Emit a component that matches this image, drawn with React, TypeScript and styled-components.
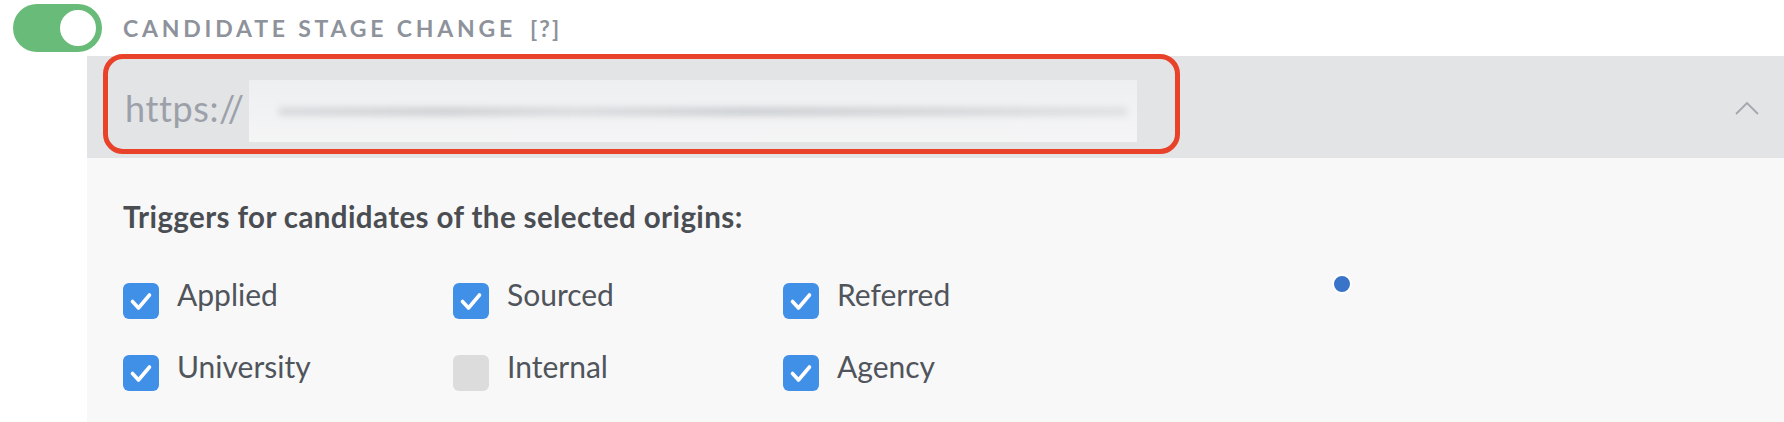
import React, { useState } from "react";
import styled, { createGlobalStyle } from "styled-components";

const GlobalStyle = createGlobalStyle`
  html, body {
    margin: 0;
    padding: 0;
    background: #ffffff;
  }
  body {
    font-family: "Lato", "Open Sans", sans-serif;
  }
`;

type Origin = { label: string; checked: boolean };

const ORIGINS: Origin[] = [
  { label: "Applied", checked: true },
  { label: "Sourced", checked: true },
  { label: "Referred", checked: true },
  { label: "University", checked: true },
  { label: "Internal", checked: false },
  { label: "Agency", checked: true },
];

const App = () => {
  const [enabled, setEnabled] = useState<boolean>(true);
  const [origins, setOrigins] = useState<Origin[]>(ORIGINS);

  const toggleOrigin = (index: number) => {
    setOrigins(prev =>
      prev.map((o, i) => (i === index ? { ...o, checked: !o.checked } : o))
    );
  };

  return (
    <Page>
      <GlobalStyle />
      <Header>
        <Toggle type="button" on={enabled} onClick={() => setEnabled(!enabled)}>
          <Knob on={enabled} />
        </Toggle>
        <Title>Candidate stage change</Title>
        <Help>[?]</Help>
      </Header>
      <Panel>
        <UrlBar>
          <Highlight>
            <Scheme>https://</Scheme>
            <UrlField>
              <BlurredText />
            </UrlField>
          </Highlight>
          <Chevron width="26" height="16" viewBox="0 0 26 16">
            <polyline
              points="2,14 13,3 24,14"
              fill="none"
              stroke="#a4a7ad"
              strokeWidth="1.8"
            />
          </Chevron>
        </UrlBar>
        <Body>
          <Heading>Triggers for candidates of the selected origins:</Heading>
          <OriginGrid>
            {origins.map((o, i) => (
              <OriginItem key={o.label} onClick={() => toggleOrigin(i)}>
                <Box checked={o.checked}>
                  {o.checked && (
                    <svg width="36" height="36" viewBox="0 0 36 36">
                      <polyline
                        points="9.5,18.5 15.5,25 26.5,12"
                        fill="none"
                        stroke="#ffffff"
                        strokeWidth="3.6"
                        strokeLinecap="round"
                        strokeLinejoin="round"
                      />
                    </svg>
                  )}
                </Box>
                <Label>{o.label}</Label>
              </OriginItem>
            ))}
          </OriginGrid>
          <Dot />
        </Body>
      </Panel>
    </Page>
  );
};

const Page = styled.div`
  width: 1784px;
  height: 422px;
  overflow: hidden;
  display: flex;
  flex-direction: column;
`;

const Header = styled.div`
  height: 56px;
  display: flex;
  align-items: center;
  padding-left: 13px;
`;

interface ToggleProps {
  on: boolean;
}

const Toggle = styled.button<ToggleProps>`
  margin: 0;
  padding: 0;
  border: none;
  cursor: pointer;
  width: 89px;
  height: 48px;
  border-radius: 24px;
  background-color: ${props => (props.on ? "#68bb78" : "#c9ccd1")};
  display: flex;
  align-items: center;
  justify-content: ${props => (props.on ? "flex-end" : "flex-start")};
  padding: 0 3px;
  box-sizing: border-box;
`;

const Knob = styled.span<ToggleProps>`
  width: 36px;
  height: 36px;
  border-radius: 50%;
  background: #ffffff;
  border: 3px solid ${props => (props.on ? "#68bb78" : "#c9ccd1")};
`;

const Title = styled.span`
  margin-left: 21px;
  font-family: "Lato", sans-serif;
  font-weight: 700;
  font-size: 23px;
  letter-spacing: 3.8px;
  text-transform: uppercase;
  color: #8d929b;
`;

const Help = styled.span`
  margin-left: 14px;
  font-family: "Lato", sans-serif;
  font-weight: 700;
  font-size: 23px;
  letter-spacing: 2px;
  color: #8d929b;
`;

const Panel = styled.div`
  margin-left: 87px;
  flex: 1;
  background: #f8f8f8;
  display: flex;
  flex-direction: column;
`;

const UrlBar = styled.div`
  height: 102px;
  background: #e3e4e6;
  display: flex;
  align-items: flex-start;
  justify-content: space-between;
  padding-right: 24px;
`;

const Highlight = styled.div`
  margin-top: -2px;
  margin-left: 16px;
  width: 1077px;
  height: 100px;
  box-sizing: border-box;
  border: 5px solid #e8432a;
  border-radius: 20px;
  display: flex;
  align-items: flex-start;
  padding: 21px 38px 0 17px;
`;

const Scheme = styled.span`
  font-family: "Lato", sans-serif;
  font-size: 36px;
  letter-spacing: 0.6px;
  line-height: 44px;
  color: #9ca1a9;
  margin-top: 6px;
`;

const UrlField = styled.div`
  flex: 1;
  margin-left: 4px;
  height: 62px;
  background: linear-gradient(180deg, #eeeff1 0%, #f5f5f6 100%);
  display: flex;
  align-items: center;
  padding-left: 29px;
  box-sizing: border-box;
`;

const BlurredText = styled.div`
  width: 850px;
  height: 9px;
  border-radius: 5px;
  background: linear-gradient(
    90deg,
    #d9dbde 0%,
    #cfd1d4 20%,
    #dadcdf 35%,
    #cdd0d3 55%,
    #d4d6d9 75%,
    #dfe1e3 100%
  );
  filter: blur(3px);
`;

const Chevron = styled.svg`
  margin-top: 44px;
`;

const Body = styled.div`
  position: relative;
  padding: 42px 0 0 36px;
`;

const Heading = styled.div`
  font-family: "Lato", sans-serif;
  font-weight: 700;
  font-size: 29.5px;
  letter-spacing: 0.4px;
  line-height: 34px;
  color: #4a4d52;
`;

const OriginGrid = styled.div`
  margin-top: 49px;
  display: grid;
  grid-template-columns: repeat(3, 330px);
  row-gap: 36px;
`;

const OriginItem = styled.div`
  display: flex;
  align-items: flex-start;
  cursor: pointer;
`;

interface BoxProps {
  checked: boolean;
}

const Box = styled.span<BoxProps>`
  width: 36px;
  height: 36px;
  border-radius: 6px;
  background-color: ${props => (props.checked ? "#4190e8" : "#dcdcdc")};
  display: flex;
  align-items: center;
  justify-content: center;
  flex-shrink: 0;
`;

const Label = styled.span`
  margin-left: 18px;
  margin-top: -4px;
  font-family: "Lato", sans-serif;
  font-size: 30px;
  line-height: 30px;
  color: #50545b;
`;

const Dot = styled.span`
  position: absolute;
  left: 1245px;
  top: 116px;
  width: 16px;
  height: 16px;
  border-radius: 50%;
  background: #3a74c8;
  border: 2px solid #ffffff;
`;

export default App;
